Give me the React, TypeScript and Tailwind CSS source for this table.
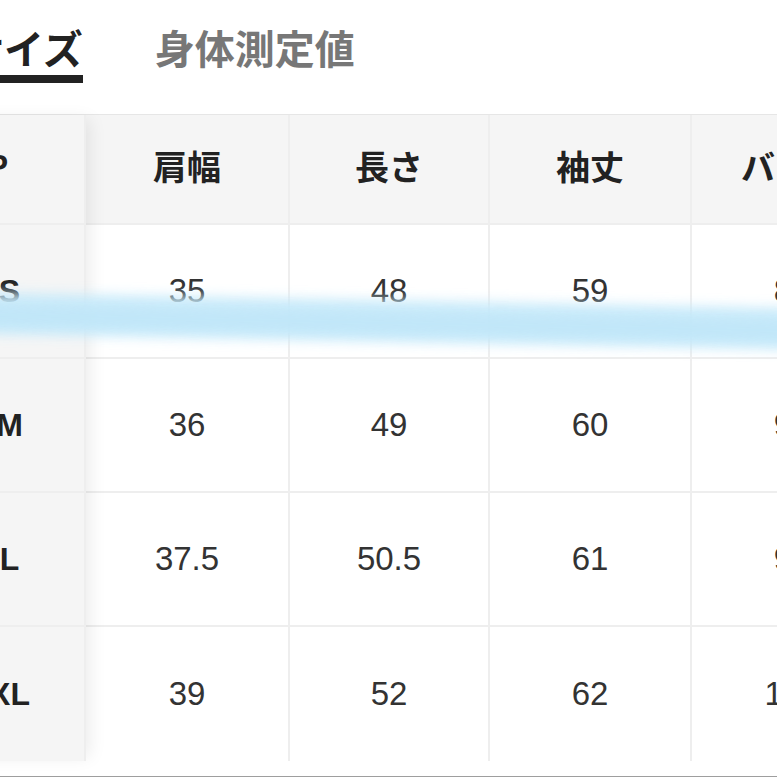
import React from "react";

const cols = [
  { label: "肩幅", w: "w-[204px]" },
  { label: "長さ", w: "w-[200px]" },
  { label: "袖丈", w: "w-[202px]" },
  { label: "バスト", w: "w-[202px]" },
];

const rows = [
  { size: "S", v: ["35", "48", "59", "86"] },
  { size: "M", v: ["36", "49", "60", "90"] },
  { size: "L", v: ["37.5", "50.5", "61", "94"] },
  { size: "XL", v: ["39", "52", "62", "100"] },
];

export default function App() {
  return (
    <div className="relative w-[777px] h-[777px] overflow-hidden bg-white font-['Noto_Sans_CJK_JP','Noto_Sans',sans-serif]">
      {/* Tabs */}
      <div className="h-[114px] pt-[23px] flex gap-[72px] -ml-[36px]">
        <div className="flex flex-col">
          <span className="text-[40px] leading-[48px] font-bold text-[#222] whitespace-nowrap">サイズ</span>
          <div className="mt-[4px] h-[8px] bg-[#222]" />
        </div>
        <div className="flex flex-col">
          <span className="text-[40px] leading-[48px] font-bold text-[#777] whitespace-nowrap">身体測定値</span>
        </div>
      </div>

      {/* Table */}
      <div className="flex border-t border-[#e6e6e6]">
        <div className="relative z-10 w-[151px] shrink-0 -ml-[65px] flex flex-col bg-[#f5f5f5] border-r-2 border-[#eeeeee] shadow-[8px_0_16px_-4px_rgba(0,0,0,0.08)]">
          <div className="h-[110px] flex items-center justify-end pr-[76px] pb-[6px] border-b-2 border-[#eeeeee] text-[32px] font-bold text-[#222] font-['Liberation_Sans',sans-serif]">
            JP
          </div>
          {rows.map((r, i) => (
            <div
              key={r.size}
              className={
                "h-[134px] flex items-center justify-center text-[32px] font-bold text-[#222] font-['Liberation_Sans',sans-serif] " +
                (i < rows.length - 1 ? "border-b-2 border-[#eeeeee]" : "")
              }
            >
              {r.size}
            </div>
          ))}
        </div>
        <div className="flex flex-col shrink-0">
          <div className="flex h-[110px] bg-[#f5f5f5] border-b-2 border-[#eeeeee]">
            {cols.map((c) => (
              <div
                key={c.label}
                className={c.w + " shrink-0 flex items-center justify-center pb-[8px] border-r-2 border-[#eeeeee] text-[34px] font-bold text-[#222] whitespace-nowrap"}
              >
                {c.label}
              </div>
            ))}
          </div>
          {rows.map((r, i) => (
            <div
              key={r.size}
              className={"flex h-[134px] " + (i < rows.length - 1 ? "border-b-2 border-[#eeeeee]" : "")}
            >
              {r.v.map((v, j) => (
                <div
                  key={j}
                  className={cols[j].w + " shrink-0 flex items-center justify-center border-r-2 border-[#eeeeee] text-[33px] text-[#333] font-['Liberation_Sans',sans-serif]"}
                >
                  {v}
                </div>
              ))}
            </div>
          ))}
        </div>
      </div>

      <div className="mt-[15px] h-[2px] bg-[#9e9e9e]" />

      {/* Highlighter stroke */}
      <svg className="absolute left-0 top-[260px] z-20 pointer-events-none" width="777" height="130" viewBox="0 0 777 130">
        <defs>
          <filter id="blur" filterUnits="userSpaceOnUse" x="-50" y="0" width="880" height="130">
            <feGaussianBlur stdDeviation="6" />
          </filter>
        </defs>
        <path d="M -30 53 Q 300 61 810 69" stroke="#c8eafa" strokeWidth="42" fill="none" opacity="0.92" filter="url(#blur)" />
        <path d="M -30 55 Q 300 63 810 71" stroke="#bae4f8" strokeWidth="22" fill="none" opacity="0.6" filter="url(#blur)" />
      </svg>
    </div>
  );
}
